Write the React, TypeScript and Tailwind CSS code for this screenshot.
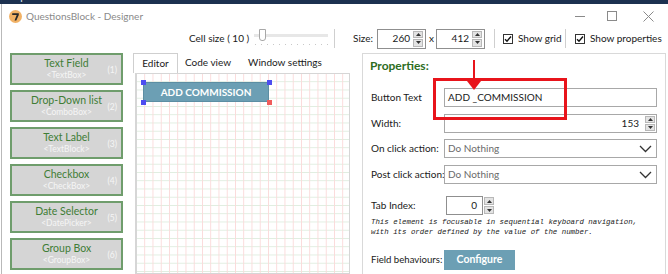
import React from "react";

const font = "font-['Lato','Noto_Sans',sans-serif]";

function Spinner({ h = 19 }: { h?: number }) {
  return (
    <div className="flex flex-col w-[10px] gap-[1px] shrink-0" style={{ height: h - 4 }}>
      <div className="flex-1 bg-[#e3e3e3] border border-[#b8b8b8] flex items-center justify-center">
        <svg width="5" height="3" viewBox="0 0 5 3"><path d="M0 3 L2.5 0 L5 3 Z" fill="#333" /></svg>
      </div>
      <div className="flex-1 bg-[#e3e3e3] border border-[#b8b8b8] flex items-center justify-center">
        <svg width="5" height="3" viewBox="0 0 5 3"><path d="M0 0 L2.5 3 L5 0 Z" fill="#333" /></svg>
      </div>
    </div>
  );
}

function Check() {
  return (
    <div className="w-[10px] h-[10px] border border-[#333] bg-white flex items-center justify-center shrink-0">
      <svg width="8" height="8" viewBox="0 0 8 8"><path d="M1 4.2 L3 6.2 L7 1.5" fill="none" stroke="#111" strokeWidth="1.4" /></svg>
    </div>
  );
}

function Chevron() {
  return (
    <svg width="13" height="8" viewBox="0 0 13 8" className="mr-[4px] shrink-0">
      <path d="M1 1 L6.5 6.5 L12 1" fill="none" stroke="#333" strokeWidth="1.3" />
    </svg>
  );
}

const tools = [
  ["Text Field", "<TextBox>", "(1)"],
  ["Drop-Down list", "<ComboBox>", "(2)"],
  ["Text Label", "<TextBlock>", "(3)"],
  ["Checkbox", "<CheckBox>", "(4)"],
  ["Date Selector", "<DatePicker>", "(5)"],
  ["Group Box", "<GroupBox>", "(6)"],
];

export default function App() {
  return (
    <div className={`w-[668px] h-[274px] overflow-hidden bg-white relative ${font} text-[#1a1a1a] whitespace-nowrap`}>
      {/* top dark strip */}
      <div className="h-[4px] bg-[#1c3150] overflow-hidden">
        <div className="text-[11px] leading-[11px] mt-[-9px] text-[#dfe6ee] whitespace-nowrap font-['Liberation_Sans',sans-serif]">
          veloper\ Smart Buttons editor
        </div>
      </div>
      <div className="border-l border-[#b9b9b9] ml-[1px] h-[270px] flex flex-col">
        {/* title bar */}
        <div className="h-[24px] flex items-center pl-[7px] shrink-0">
          <svg width="13" height="13" viewBox="0 0 13 13" className="shrink-0">
            <circle cx="6.5" cy="6.5" r="6.5" fill="#f2b265" />
            <path d="M3.2 3.3 H9.8 V5 L7.3 10.5 H5.5 L7.7 5 H3.2 Z" fill="#2a2a2a" />
          </svg>
          <span className="ml-[4px] text-[10px] text-[#8a8a8a]">QuestionsBlock - Designer</span>
          <div className="ml-auto flex items-center">
            <div className="w-[10px] h-[1px] bg-[#8a8a8a] mr-[22px]" />
            <div className="w-[10px] h-[10px] border border-[#8a8a8a] mr-[26px]" />
            <svg width="11" height="11" viewBox="0 0 11 11" className="mr-[14px]">
              <path d="M0.5 0.5 L10.5 10.5 M10.5 0.5 L0.5 10.5" stroke="#8a8a8a" strokeWidth="1" />
            </svg>
          </div>
        </div>
        {/* toolbar */}
        <div className="h-[21px] flex items-center shrink-0 text-[10px]">
          <span className="ml-[187px] w-[62px] shrink-0">Cell size ( 10 )</span>
          <div className="relative ml-[3px] w-[74px] h-[21px] shrink-0">
            <div className="absolute left-0 right-0 top-[6px] h-[3px] bg-[#e7e7e7]" />
            <div className="absolute left-[5px] top-[1px] w-[7px] h-[12px] bg-white border border-[#a8a8a8] rounded-b-[3px]" />
            <div className="absolute left-[1px] right-0 top-[16px] h-[1px] bg-[repeating-linear-gradient(to_right,#c8c8c8_0px,#c8c8c8_1px,transparent_1px,transparent_6px)]" />
          </div>
          <div className="w-[1px] h-[19px] bg-[#cfcfcf] ml-[6px] shrink-0" />
          <span className="ml-[18px] w-[23px] shrink-0">Size:</span>
          <div className="ml-[1px] w-[49px] h-[20px] border border-[#8f8f8f] flex items-center justify-end pr-[2px] gap-[3px] shrink-0">
            <span>260</span>
            <Spinner h={20} />
          </div>
          <span className="ml-[3px] w-[7px] shrink-0">x</span>
          <div className="w-[49px] h-[20px] border border-[#8f8f8f] flex items-center justify-end pr-[2px] gap-[3px] shrink-0">
            <span>412</span>
            <Spinner h={20} />
          </div>
          <div className="w-[1px] h-[19px] bg-[#cfcfcf] ml-[9px] shrink-0" />
          <div className="ml-[8px]"><Check /></div>
          <span className="ml-[5px] w-[47px] shrink-0">Show grid</span>
          <div className="w-[1px] h-[19px] bg-[#cfcfcf] shrink-0" />
          <div className="ml-[9px]"><Check /></div>
          <span className="ml-[5px]">Show properties</span>
        </div>
        {/* main */}
        <div className="flex flex-1 min-h-0">
          {/* tools */}
          <div className="w-[113px] ml-[8px] mt-[4px] flex flex-col gap-[5px] shrink-0">
            {tools.map(([t, s, n]) => (
              <div key={t} className="relative h-[32px] bg-[#d5d5d5] border-2 border-[#6f9d6c] flex flex-col items-center justify-center">
                <span className="text-[10.5px] leading-[13px] text-[#3f7d35]">{t}</span>
                <span className="text-[8.5px] leading-[11px] text-[#f6f6f6]">{s}</span>
                <span className="absolute right-[4px] top-[9px] text-[8.5px] text-[#f6f6f6]">{n}</span>
              </div>
            ))}
          </div>
          {/* editor */}
          <div className="ml-[10px] w-[219px] mt-[4px] flex flex-col shrink-0">
            <div className="flex h-[20px] items-end text-[10px]">
              <div className="h-[20px] w-[45px] border border-b-0 border-[#cfcfcf] bg-white flex items-center justify-center">Editor</div>
              <span className="ml-[7px] mb-[3px]">Code view</span>
              <span className="ml-[17px] mb-[3px]">Window settings</span>
            </div>
            <div className="ml-[2px] mr-[2px] relative flex-1 border border-[#d6d6d6] border-l-2 bg-white bg-[linear-gradient(to_right,#fbdada_1px,transparent_1px),linear-gradient(to_bottom,#e0ede0_1px,transparent_1px)] bg-[size:8.25px_8.25px] bg-[position:-1px_-1px]">
              <div className="absolute left-[6px] top-[8px] w-[126px] h-[20px] bg-[#6c9fb4] border border-[#5c8ea3] flex items-center justify-center text-white font-bold text-[10px]">
                ADD COMMISSION
              </div>
              <div className="absolute left-[4px] top-[6px] w-[5px] h-[5px] bg-[#4d4df0]" />
              <div className="absolute left-[130px] top-[6px] w-[5px] h-[5px] bg-[#4d4df0]" />
              <div className="absolute left-[4px] top-[26px] w-[5px] h-[5px] bg-[#4d4df0]" />
              <div className="absolute left-[130px] top-[26px] w-[5px] h-[5px] bg-[#f05c5c]" />
            </div>
          </div>
          {/* properties */}
          <div className="ml-[10px] w-[304px] mt-[4px] border border-b-0 border-[#d9d9d9] pl-[7px] pr-[8px] shrink-0 relative text-[10px]">
            <div className="mt-[4px] h-[16px] text-[12px] font-bold text-[#2d6d1e] leading-[16px]">Properties:</div>
            <div className="mt-[14px] flex items-center h-[19px]">
              <span className="w-[74px] pl-[1px] shrink-0">Button Text</span>
              <div className="flex-1 h-[19px] border border-[#a8a8a8] flex items-center pl-[3px]">ADD _COMMISSION</div>
            </div>
            <div className="mt-[7px] flex items-center h-[19px]">
              <span className="w-[74px] pl-[1px] shrink-0">Width:</span>
              <div className="flex-1 h-[19px] border border-[#a8a8a8] flex items-center justify-end pr-[1px]">
                <span className="mr-[6px]">153</span>
                <Spinner h={19} />
              </div>
            </div>
            <div className="mt-[6px] flex items-center h-[19px]">
              <span className="w-[74px] pl-[1px] shrink-0">On click action:</span>
              <div className="flex-1 h-[19px] border border-[#a8a8a8] flex items-center pl-[3px] justify-between text-[#6a6a6a]">
                <span>Do Nothing</span>
                <Chevron />
              </div>
            </div>
            <div className="mt-[7px] flex items-center h-[19px]">
              <span className="w-[74px] pl-[1px] shrink-0">Post click action:</span>
              <div className="flex-1 h-[19px] border border-[#a8a8a8] flex items-center pl-[3px] justify-between text-[#6a6a6a]">
                <span>Do Nothing</span>
                <Chevron />
              </div>
            </div>
            <div className="mt-[12px] flex items-center h-[19px]">
              <span className="w-[76px] pl-[1px] shrink-0">Tab Index:</span>
              <div className="w-[37px] h-[19px] border border-[#8f8f8f] flex items-center justify-end pr-[5px] shrink-0">0</div>
              <div className="ml-[1px]"><Spinner h={21} /></div>
            </div>
            <div className="mt-[2px] pl-[1px] font-['Liberation_Mono',monospace] italic text-[7.4px] leading-[10px] text-[#222]">
              This element is focusable in sequential keyboard navigation,<br />
              with its order defined by the value of the number.
            </div>
            <div className="mt-[13px] flex items-center h-[20px]">
              <span className="w-[74px] pl-[1px] shrink-0 text-[9.6px]">Field behaviours:</span>
              <div className="w-[71px] h-[20px] bg-[#6c9fb4] flex items-center justify-center text-white font-bold text-[10.5px]">Configure</div>
            </div>
            {/* annotation */}
            <div className="absolute left-[70px] top-[24px] w-[134px] h-[42px] border-[3px] border-[#e8141b]" />
            <div className="absolute left-[110px] top-[6px] w-[2px] h-[24px] bg-[#e8141b]" />
            <svg className="absolute left-[104px] top-[27px]" width="14" height="9" viewBox="0 0 14 9">
              <path d="M0 0 L7 9 L14 0 Z" fill="#e8141b" />
            </svg>
          </div>
        </div>
      </div>
    </div>
  );
}
